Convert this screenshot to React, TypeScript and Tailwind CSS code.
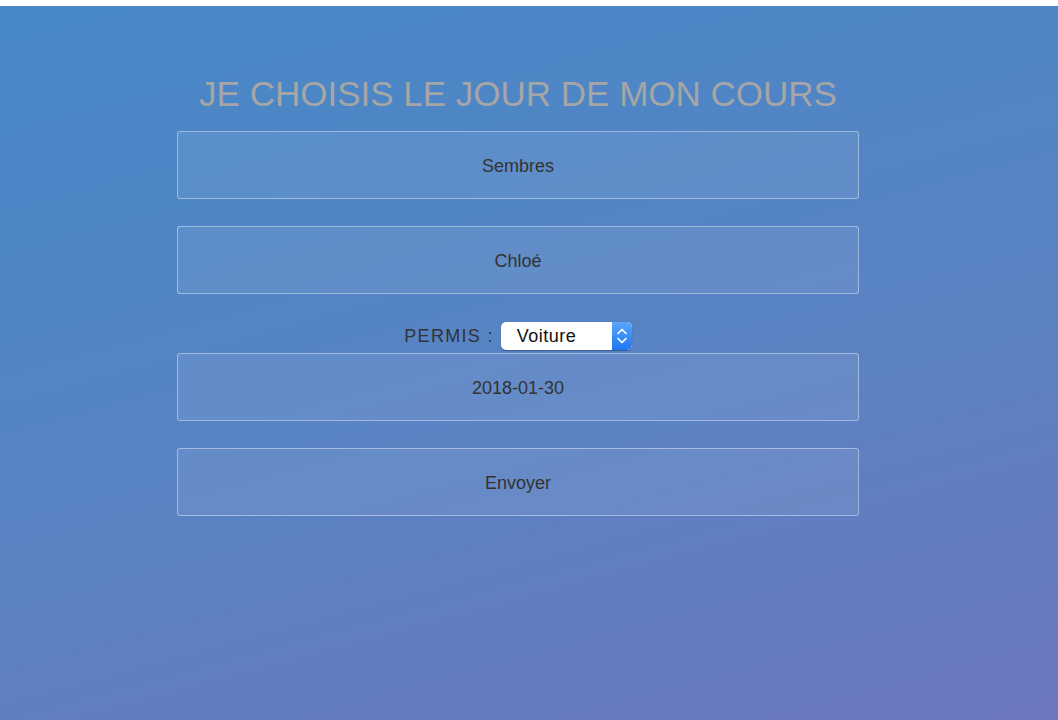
import React from 'react';

const fields = ['Sembres', 'Chloé'];

const Field: React.FC<{ label: string }> = ({ label }) => (
  <div className="flex h-[68px] w-full items-center justify-center rounded-[3px] border border-white/40 bg-white/[0.08] pt-[2px] text-[18px] text-[#333]">
    {label}
  </div>
);

const App: React.FC = () => {
  return (
    <div className="min-h-screen bg-white pt-[6px] font-['Liberation_Sans',Arial,sans-serif]">
      <div className="h-[714px] bg-[linear-gradient(165deg,#4688c7_0%,#5b82c3_60%,#6c76be_100%)] pr-[22px]">
        <div className="mx-auto flex w-[682px] flex-col items-center pt-[68px]">
          <h1 className="text-[35px] leading-[40px] text-[#a6a6a6]">
            JE CHOISIS LE JOUR DE MON COURS
          </h1>

          <div className="mt-[17px] flex w-full flex-col gap-[27px]">
            {fields.map((f) => (
              <Field key={f} label={f} />
            ))}
          </div>

          <div className="mt-[28px] flex h-[28px] items-center gap-[7px]">
            <span className="text-[18px] tracking-[1.3px] text-[#333]">PERMIS :</span>
            <div className="flex h-[28px] w-[131px] items-stretch overflow-hidden rounded-[5px] bg-white shadow-[0_0.5px_1px_rgba(0,0,0,0.3)]">
              <span className="flex-1 pl-[16px] text-[18px] leading-[28px] tracking-[0.5px] text-[#111]">Voiture</span>
              <span className="flex w-[20px] items-center justify-center rounded-r-[5px] bg-[linear-gradient(#5aa6fb,#1d76f2)]">
                <svg width="12" height="22" viewBox="0 0 12 22" fill="none" stroke="white" strokeWidth="1.7" strokeLinecap="round" strokeLinejoin="round">
                  <path d="M2 8.5 L6 4.5 L10 8.5" />
                  <path d="M2 13.5 L6 17.5 L10 13.5" />
                </svg>
              </span>
            </div>
          </div>

          <div className="mt-[3px] flex w-full flex-col gap-[27px]">
            <Field label="2018-01-30" />
            <Field label="Envoyer" />
          </div>
        </div>
      </div>
    </div>
  );
};

export default App;
